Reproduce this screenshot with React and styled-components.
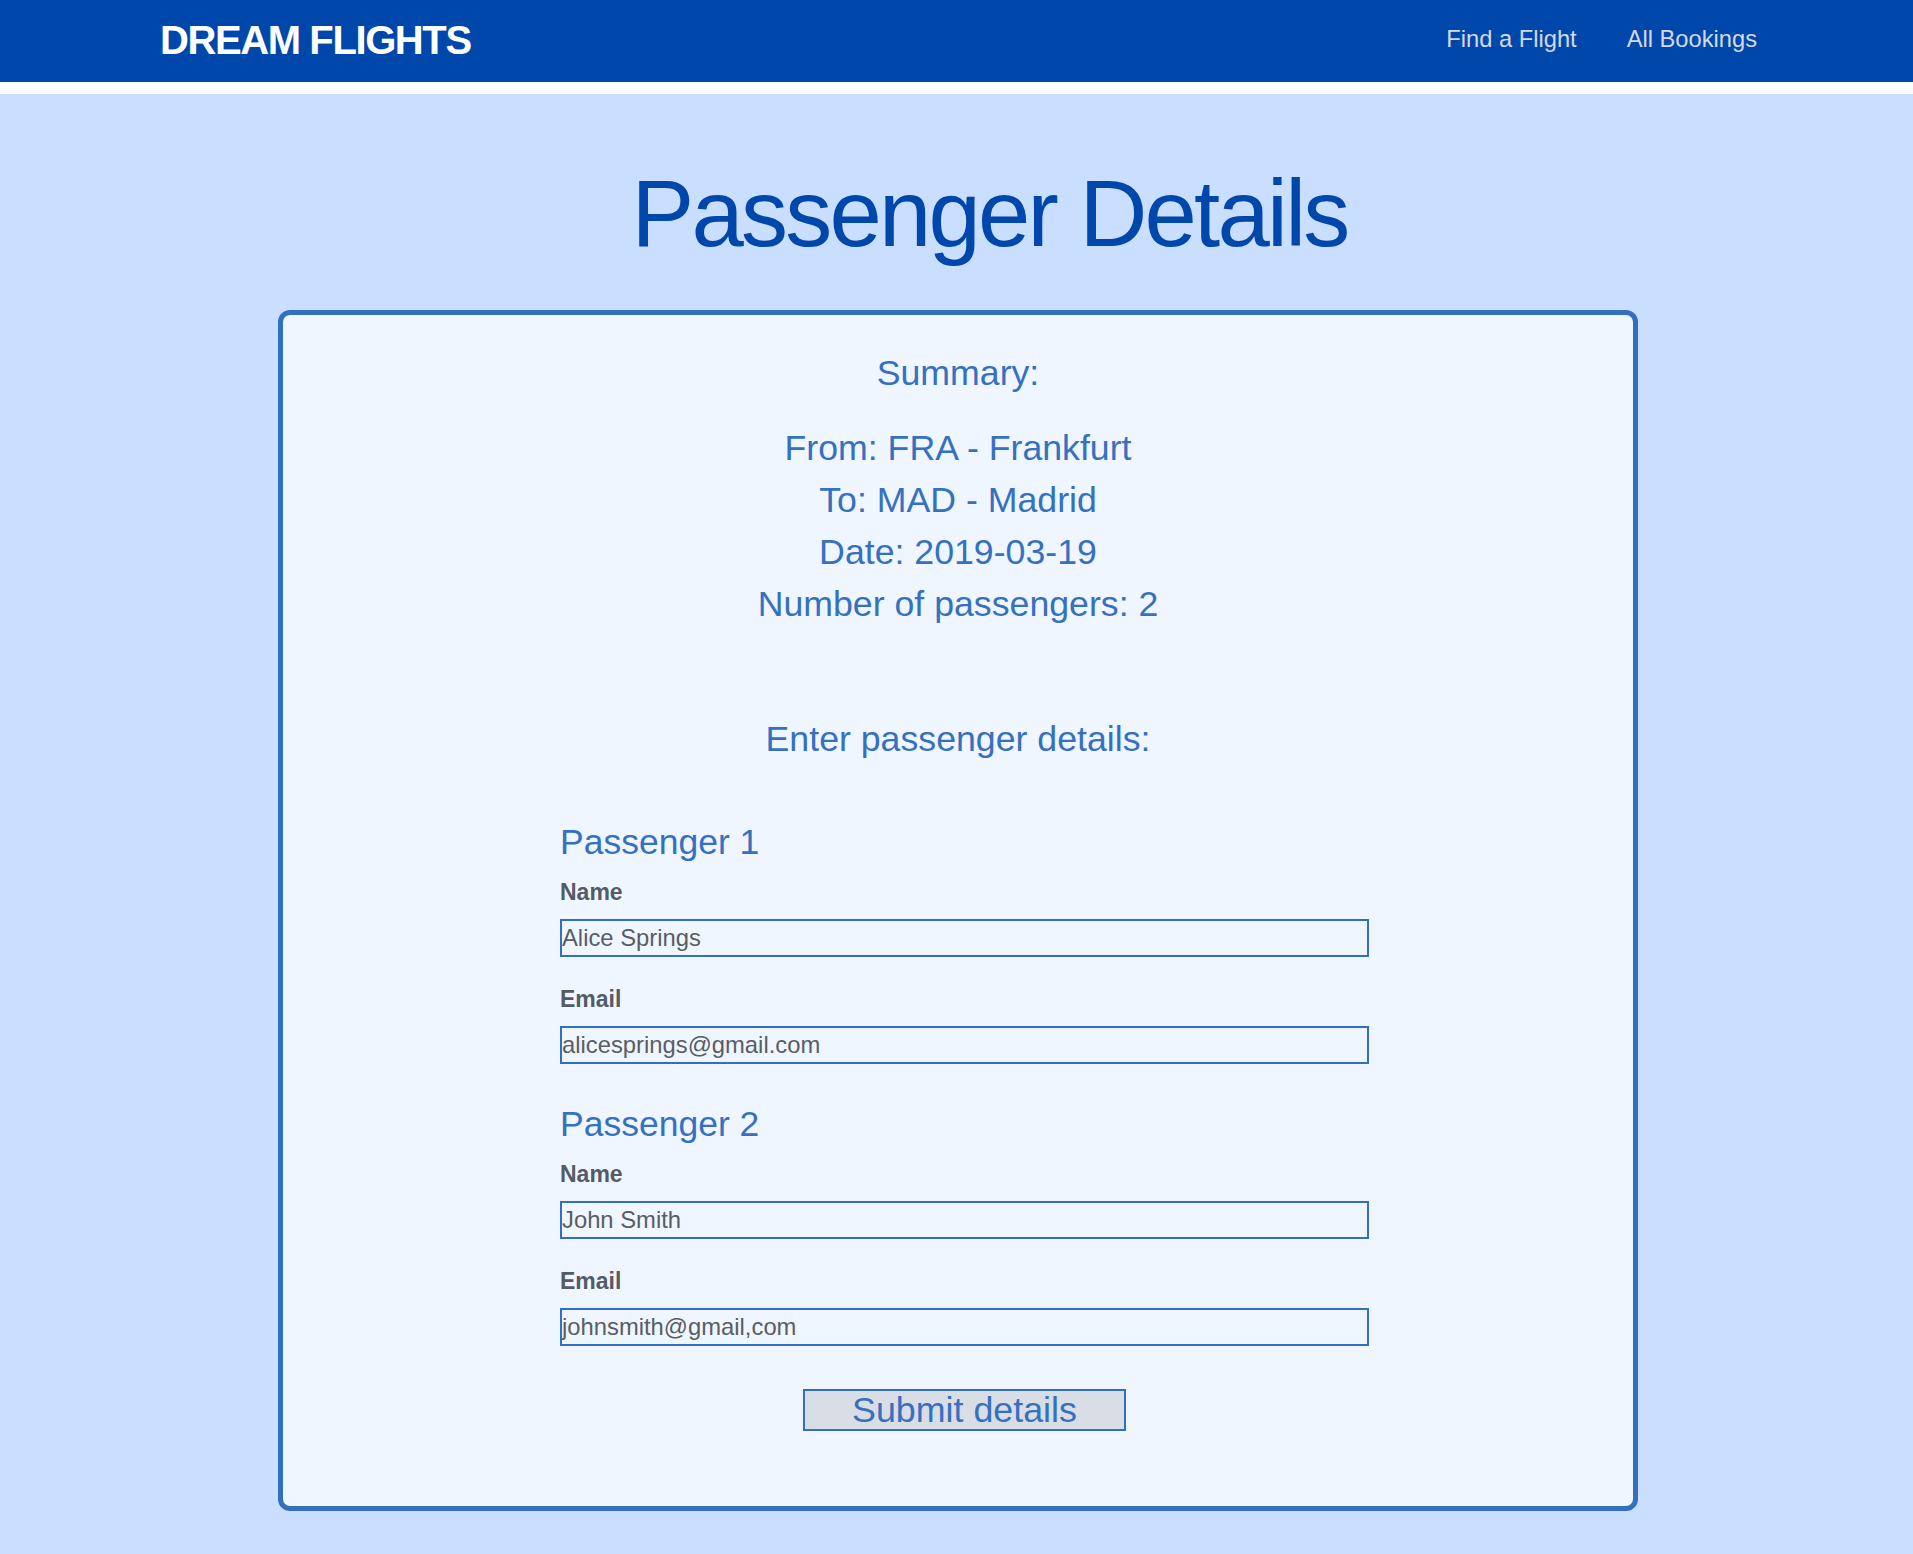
import React from "react";
import styled, { createGlobalStyle } from "styled-components";

const GlobalStyle = createGlobalStyle`
  html, body {
    margin: 0;
    padding: 0;
    background: #cadfff;
  }
  * { box-sizing: border-box; }
`;

const Page = styled.div`
  font-family: "Liberation Sans", Arial, Helvetica, sans-serif;
  background: #cadfff;
  min-height: 100vh;
`;

const Header = styled.header`
  box-sizing: content-box;
  height: 82px;
  background: #0047ab;
  border-bottom: 12px solid #ffffff;
  display: flex;
  align-items: center;
  justify-content: space-between;
  padding: 0 156px 0 160px;
`;

const Logo = styled.div`
  color: #ffffff;
  font-size: 40px;
  font-weight: 700;
  line-height: 46px;
  letter-spacing: -1.4px;
  margin-top: -2px;
`;

const Nav = styled.nav`
  display: flex;
  gap: 50px;
  margin-bottom: 5px;
`;

const NavLink = styled.a`
  color: #d3d9e5;
  font-size: 23.7px;
  line-height: 28px;
  text-decoration: none;
  cursor: pointer;
`;

const Main = styled.main`
  padding: 73px 0 43px;
`;

const Title = styled.h1`
  margin: 0;
  padding-left: 66px;
  text-align: center;
  color: #0047ab;
  font-size: 94px;
  line-height: 94px;
  font-weight: 400;
  letter-spacing: -2.75px;
`;

const Card = styled.section`
  width: 1360px;
  margin: 49px 275px 0 278px;
  border: 5px solid #336fbf;
  border-radius: 12px;
  background: #eff6ff;
  padding: 38px 0 75px;
  color: #3670c0;
  text-align: center;
`;

const SectionTitle = styled.h3`
  margin: ${(p) => p.$top || 0}px 0 0;
  font-size: 35.7px;
  line-height: 40px;
  font-weight: 400;
`;

const SummaryList = styled.div`
  margin-top: 29px;
  font-size: 35.7px;
  line-height: 52px;
`;

const SummaryLine = styled.div``;

const Form = styled.form`
  width: 809px;
  margin: 63px 0 0 277px;
  display: flex;
  flex-direction: column;
  text-align: left;
`;

const PassengerBlock = styled.div`
  display: flex;
  flex-direction: column;
  & + & {
    margin-top: 40px;
  }
`;

const PassengerHeading = styled.h4`
  margin: 0 0 18px;
  font-size: 35.5px;
  line-height: 40px;
  font-weight: 400;
  color: #3670c0;
`;

const Field = styled.div`
  display: flex;
  flex-direction: column;
  gap: 14px;
  & + & {
    margin-top: 30px;
  }
`;

const Label = styled.label`
  font-size: 23px;
  line-height: 25px;
  font-weight: 700;
  color: #555b66;
`;

const Input = styled.input`
  width: 100%;
  height: 38px;
  margin: 0;
  padding: 0;
  border: 2px solid #336fbf;
  border-radius: 0;
  background: transparent;
  font-family: "Liberation Sans", Arial, Helvetica, sans-serif;
  font-size: 23.8px;
  color: #595d64;
  outline: none;
`;

const SubmitButton = styled.button`
  align-self: center;
  width: 40%;
  height: 42px;
  margin-top: 43px;
  padding: 0;
  border: 2px solid #336fbf;
  border-radius: 0;
  background: #d9dde6;
  color: #3670c0;
  font-family: "Liberation Sans", Arial, Helvetica, sans-serif;
  font-size: 35.8px;
  line-height: 38px;
  cursor: pointer;
`;

const passengers = [
  { name: "Alice Springs", email: "alicesprings@gmail.com" },
  { name: "John Smith", email: "johnsmith@gmail,com" },
];

export default function App() {
  return (
    <Page>
      <GlobalStyle />
      <Header>
        <Logo>DREAM FLIGHTS</Logo>
        <Nav>
          <NavLink>Find a Flight</NavLink>
          <NavLink>All Bookings</NavLink>
        </Nav>
      </Header>
      <Main>
        <Title>Passenger Details</Title>
        <Card>
          <SectionTitle>Summary:</SectionTitle>
          <SummaryList>
            <SummaryLine>From: FRA - Frankfurt</SummaryLine>
            <SummaryLine>To: MAD - Madrid</SummaryLine>
            <SummaryLine>Date: 2019-03-19</SummaryLine>
            <SummaryLine>Number of passengers: 2</SummaryLine>
          </SummaryList>
          <SectionTitle $top={89}>Enter passenger details:</SectionTitle>
          <Form onSubmit={(e) => e.preventDefault()}>
            {passengers.map((p, i) => (
              <PassengerBlock key={i}>
                <PassengerHeading>Passenger {i + 1}</PassengerHeading>
                <Field>
                  <Label htmlFor={`name-${i}`}>Name</Label>
                  <Input id={`name-${i}`} type="text" defaultValue={p.name} />
                </Field>
                <Field>
                  <Label htmlFor={`email-${i}`}>Email</Label>
                  <Input id={`email-${i}`} type="text" defaultValue={p.email} />
                </Field>
              </PassengerBlock>
            ))}
            <SubmitButton type="submit">Submit details</SubmitButton>
          </Form>
        </Card>
      </Main>
    </Page>
  );
}
